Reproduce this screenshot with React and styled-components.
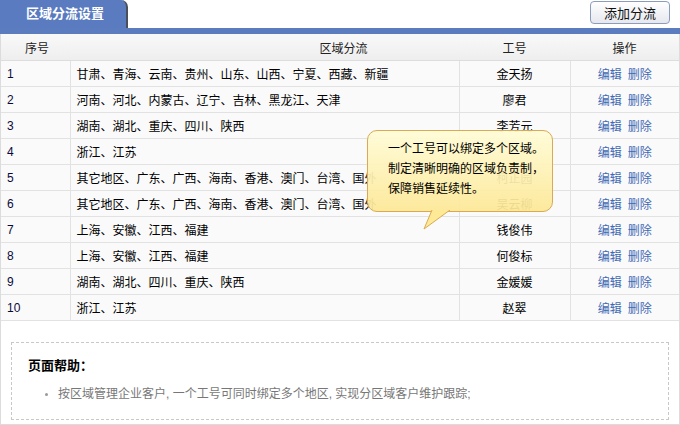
import React from 'react'
import styled, { createGlobalStyle } from 'styled-components'

const GlobalStyle = createGlobalStyle`
  html, body { margin: 0; padding: 0; background: #fff; }
  body {
    font-family: "Liberation Sans", "Noto Sans CJK SC", sans-serif;
    font-size: 12px;
    color: #000;
  }
`

const Page = styled.div`
  width: 680px;
  height: 425px;
  box-sizing: border-box;
  position: relative;
  overflow: hidden;
`

const TopBar = styled.div`
  display: flex;
  align-items: flex-start;
  justify-content: space-between;
  height: 28px;
`

const Tab = styled.div`
  width: 128px;
  height: 28px;
  box-sizing: border-box;
  background: #5a7bc0;
  border-top-right-radius: 7px;
  border-right: 2px solid #4a4f5c;
  color: #fff;
  font-weight: bold;
  font-size: 13px;
  padding-left: 26px;
  line-height: 28px;
`

const AddButton = styled.button`
  margin: 1px 10px 0 0;
  width: 80px;
  height: 23px;
  border: 1px solid #8c9cbd;
  border-radius: 4px;
  background: linear-gradient(#ffffff, #e6e8ee);
  font-family: inherit;
  font-size: 13px;
  color: #111;
  padding: 0;
  cursor: pointer;
`

const BlueBar = styled.div`
  height: 6px;
  background: #5b7cbf;
`

const Body = styled.div`
  border-left: 1px solid #dcdcdc;
  border-right: 1px solid #dcdcdc;
  border-bottom: 1px solid #dcdcdc;
  padding-bottom: 4px;
`

const Table = styled.table`
  width: 100%;
  border-collapse: collapse;
  table-layout: fixed;
`

const Th = styled.th`
  height: 26px;
  padding: 0 0 0 ${p => p.$pl || 0}px;
  font-weight: normal;
  color: #222;
  text-align: ${p => p.$align || 'center'};
  background: linear-gradient(#f9f9f9, #eeeeee);
  border-bottom: 1px solid #dddddd;
`

const Td = styled.td`
  height: 25px;
  padding: 0 6px;
  background: #fafafa;
  border: 1px solid #e2e2e2;
  border-top: none;
  text-align: ${p => p.$align || 'left'};
  color: ${p => p.$color || '#000'};
  white-space: nowrap;
  overflow: hidden;
  &:first-child { border-left: none; }
  &:last-child { border-right: none; }
`

const Link = styled.a`
  color: #4169b5;
  text-decoration: none;
  margin: 0 3px;
  cursor: pointer;
`

const HelpBox = styled.div`
  margin: 21px 10px 0 10px;
  height: 78px;
  box-sizing: border-box;
  border: 1px dashed #c8c8c8;
  padding: 13px 0 0 16px;
`

const HelpTitle = styled.div`
  font-weight: bold;
  font-size: 13px;
  height: 20px;
  line-height: 20px;
`

const HelpList = styled.ul`
  margin: 8px 0 0 0;
  padding: 0 0 0 30px;
  color: #777;
  li::marker { color: #999; font-size: 10px; }
`

const Bubble = styled.div`
  position: absolute;
  left: 367px;
  top: 130px;
  width: 186px;
  height: 82px;
  box-sizing: border-box;
  border: 1px solid #d9aa52;
  border-radius: 10px;
  background: linear-gradient(rgba(255, 252, 214, 0.93), rgba(253, 232, 150, 0.93));
  padding: 8px 0 0 20px;
  line-height: 20px;
  color: #000;
`

const Tail = styled.svg`
  position: absolute;
  left: 54px;
  top: 79px;
`

const rows = [
  ['1', '甘肃、青海、云南、贵州、山东、山西、宁夏、西藏、新疆', '金天扬'],
  ['2', '河南、河北、内蒙古、辽宁、吉林、黑龙江、天津', '廖君'],
  ['3', '湖南、湖北、重庆、四川、陕西', '李芳元'],
  ['4', '浙江、江苏', ''],
  ['5', '其它地区、广东、广西、海南、香港、澳门、台湾、国外', '柯正园'],
  ['6', '其它地区、广东、广西、海南、香港、澳门、台湾、国外', '吴云柳'],
  ['7', '上海、安徽、江西、福建', '钱俊伟'],
  ['8', '上海、安徽、江西、福建', '何俊标'],
  ['9', '湖南、湖北、四川、重庆、陕西', '金媛媛'],
  ['10', '浙江、江苏', '赵翠'],
]

export default function App() {
  return (
    <Page>
      <GlobalStyle />
      <TopBar>
        <Tab>区域分流设置</Tab>
        <AddButton type="button">添加分流</AddButton>
      </TopBar>
      <BlueBar />
      <Body>
        <Table>
          <colgroup>
            <col style={{ width: 69 }} />
            <col style={{ width: 389 }} />
            <col style={{ width: 111 }} />
            <col />
          </colgroup>
          <thead>
            <tr>
              <Th $align="left" $pl={24}>序号</Th>
              <Th $pl={158}>区域分流</Th>
              <Th>工号</Th>
              <Th>操作</Th>
            </tr>
          </thead>
          <tbody>
            {rows.map(r => (
              <tr key={r[0]}>
                <Td $color="#0a0a3a">{r[0]}</Td>
                <Td>{r[1]}</Td>
                <Td $align="center">{r[2]}</Td>
                <Td $align="center">
                  <Link>编辑</Link>
                  <Link>删除</Link>
                </Td>
              </tr>
            ))}
          </tbody>
        </Table>
        <HelpBox>
          <HelpTitle>页面帮助：</HelpTitle>
          <HelpList>
            <li>按区域管理企业客户, 一个工号可同时绑定多个地区, 实现分区域客户维护跟踪;</li>
          </HelpList>
        </HelpBox>
      </Body>
      <Bubble>
        一个工号可以绑定多个区域。<br />
        制定清晰明确的区域负责制，<br />
        保障销售延续性。
        <Tail width="30" height="22" viewBox="0 0 30 22">
          <path d="M10 0 L2 19 L28 0" fill="#fde996" stroke="#d9aa52" strokeWidth="1" />
        </Tail>
      </Bubble>
    </Page>
  )
}
